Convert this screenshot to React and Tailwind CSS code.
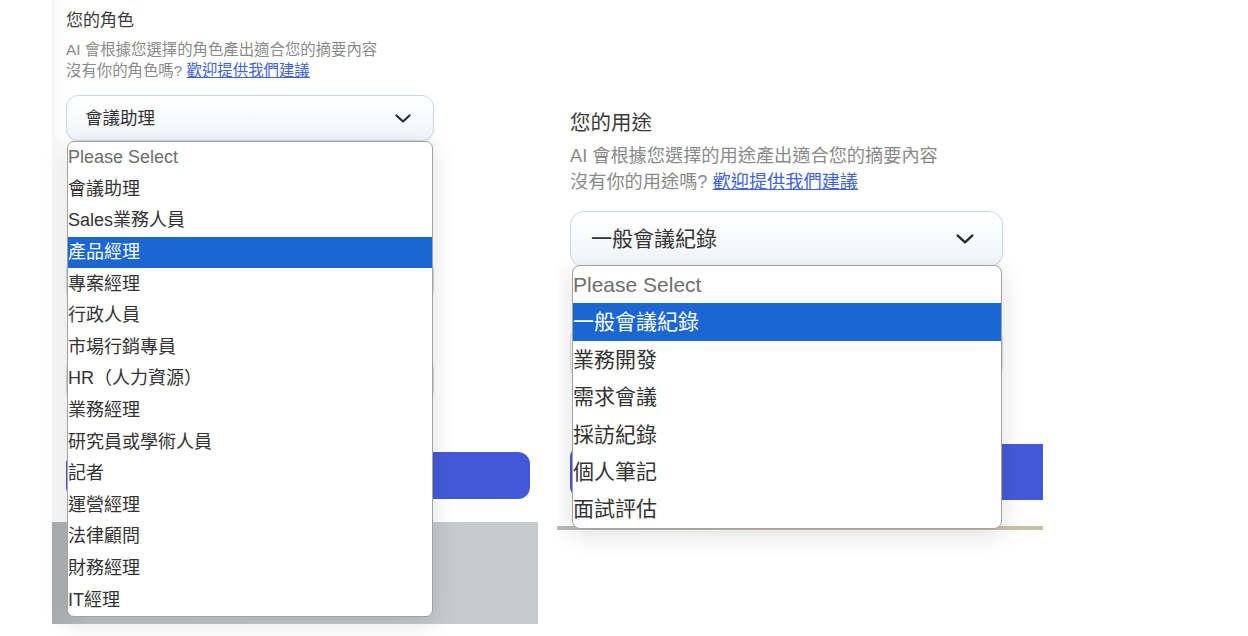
const font = "font-['Liberation_Sans','Noto_Sans_CJK_TC',sans-serif]";

const roles = [
  "會議助理",
  "Sales業務人員",
  "產品經理",
  "專案經理",
  "行政人員",
  "市場行銷專員",
  "HR（人力資源）",
  "業務經理",
  "研究員或學術人員",
  "記者",
  "運營經理",
  "法律顧問",
  "財務經理",
  "IT經理",
];

const uses = ["一般會議紀錄", "業務開發", "需求會議", "採訪紀錄", "個人筆記", "面試評估"];

const Chevron = ({ className }) => (
  <svg viewBox="0 0 16 9" fill="none" stroke="#2b2b2b" strokeWidth="2.2" strokeLinecap="round" strokeLinejoin="round" className={className}>
    <path d="M1.5 1.5 8 7.5l6.5-6" />
  </svg>
);

const App = () => {
  return (
    <div className={`w-[1248px] h-[636px] bg-white overflow-hidden flex ${font}`}>
      {/* left panel */}
      <div className="ml-[52px] w-[486px] flex flex-col">
        <div className="h-[522px] pl-[14px] pt-[9px] bg-linear-to-r from-[#f6f6f6] to-white to-[3%]">
          <h2 className="text-[17px] leading-[24px] text-[#3a3a3a]">您的角色</h2>
          <p className="mt-[6px] text-[15.4px] leading-[21px] text-[#8a8a8a]">
            AI 會根據您選擇的角色產出適合您的摘要內容
            <br />
            沒有你的角色嗎?{" "}
            <a className="text-[#3f63d9] underline">歡迎提供我們建議</a>
          </p>

          <div className="relative mt-[14px] w-[368px] h-[46px]">
            <div className="h-full rounded-[12px] border border-[#cad7ea] bg-linear-to-b from-white to-[#f1f5fa] shadow-[0_1px_2px_rgba(0,0,0,0.08)] flex items-center justify-between pl-[18px] pr-[22px]">
              <span className="text-[17.5px] text-[#333]">會議助理</span>
              <Chevron className="w-[16px] h-[9px]" />
            </div>
            <div className="absolute z-10 top-[46px] left-[1px] w-[366px] bg-white border border-[#a3a3a3] rounded-[7px] overflow-hidden shadow-[0_6px_24px_rgba(0,0,0,0.13)]">
              <div className="h-[31.6px] flex items-center text-[18px] text-[#6e6e6e]">Please Select</div>
              {roles.map((r) => (
                <div
                  key={r}
                  className={`h-[31.6px] flex items-center text-[18px] ${r === "產品經理" ? "bg-[#1a66d2] text-white" : "text-[#333]"}`}
                >
                  {r}
                </div>
              ))}
            </div>
          </div>

          <div className="mt-[116px] w-[368px] h-[46px] rounded-[12px] border border-[#d6dbe3]" />
          <div className="mt-[54px] w-[368px] h-[46px] rounded-[12px] border border-[#d6dbe3]" />
          <div className="mt-[49px] w-[464px] h-[47px] rounded-[12px] bg-[#4459d8]" />
        </div>
        <div className="h-[102px] bg-linear-to-r from-[#a9abad] via-[#c4c7ca] via-[8%] to-[#c8cbce]" />
      </div>

      {/* right panel */}
      <div className="ml-[19px] w-[486px] flex flex-col overflow-hidden">
        <div className="h-[526px] pl-[13px] pt-[109px] bg-white">
          <h2 className="text-[20.5px] leading-[28px] text-[#3a3a3a]">您的用途</h2>
          <p className="mt-[6px] text-[18.2px] leading-[26px] text-[#8a8a8a]">
            AI 會根據您選擇的用途產出適合您的摘要內容
            <br />
            沒有你的用途嗎?{" "}
            <a className="text-[#3f63d9] underline">歡迎提供我們建議</a>
          </p>

          <div className="relative mt-[16px] w-[433px] h-[56px]">
            <div className="h-full rounded-[14px] border border-[#cad7ea] bg-linear-to-b from-white to-[#f1f5fa] shadow-[0_1px_2px_rgba(0,0,0,0.08)] flex items-center justify-between pl-[20px] pr-[28px]">
              <span className="text-[21px] text-[#333]">一般會議紀錄</span>
              <Chevron className="w-[18px] h-[10px]" />
            </div>
            <div className="absolute z-10 top-[54px] left-[2px] w-[430px] bg-white border border-[#a3a3a3] rounded-[8px] overflow-hidden shadow-[0_6px_24px_rgba(0,0,0,0.13)]">
              <div className="h-[37.4px] flex items-center text-[21px] text-[#6e6e6e]">Please Select</div>
              {uses.map((u) => (
                <div
                  key={u}
                  className={`h-[37.4px] flex items-center text-[21px] ${u === "一般會議紀錄" ? "bg-[#1a66d2] text-white" : "text-[#333]"}`}
                >
                  {u}
                </div>
              ))}
            </div>
          </div>

          <div className="mt-[58px] w-[433px] h-[56px] rounded-[14px] border border-[#d6dbe3]" />
          <div className="mt-[63px] w-[500px] h-[56px] rounded-[14px] bg-[#4459d8]" />
        </div>
        <div className="h-[4px] bg-linear-to-r from-[#b9b9b9] via-[#cfc2a8] to-[#cdbfa3]" />
      </div>
    </div>
  );
};

export default App;
